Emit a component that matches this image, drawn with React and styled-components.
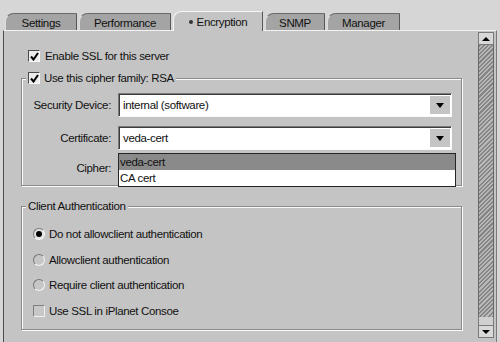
import React from "react";
import styled, { createGlobalStyle } from "styled-components";

const GlobalStyle = createGlobalStyle`
  html, body {
    margin: 0;
    padding: 0;
    background: #d6d6d6;
  }
  body {
    font-family: "Liberation Sans", Arial, sans-serif;
    font-size: 11.5px;
    letter-spacing: -0.35px;
    color: #111;
  }
`;

const Window = styled.div`
  width: 500px;
  height: 342px;
  display: flex;
  flex-direction: column;
  overflow: hidden;
  background: #d6d6d6;
`;

const TabBar = styled.div`
  height: 30px;
  box-sizing: border-box;
  display: flex;
  align-items: flex-end;
  gap: 2px;
  padding-left: 5px;
  position: relative;
  z-index: 1;
`;

const Tab = styled.div`
  width: ${(p) => p.w}px;
  height: ${(p) => (p.active ? 20 : 17)}px;
  margin-bottom: ${(p) => (p.active ? -1 : 0)}px;
  box-sizing: border-box;
  display: flex;
  align-items: center;
  justify-content: center;
  gap: 4px;
  padding-top: 1px;
  background: ${(p) => (p.active ? "#c4c4c4" : "#a4a4a4")};
  border-top: 1px solid ${(p) => (p.active ? "#f6f6f6" : "#6a6a6a")};
  border-left: 1px solid ${(p) => (p.active ? "#f6f6f6" : "#dcdcdc")};
  border-right: 1px solid #585858;
  border-top-left-radius: 9px 8px;
`;

const TabDot = styled.span`
  width: 4px;
  height: 4px;
  border-radius: 50%;
  background: #333;
`;

const Body = styled.div`
  flex: 1;
  min-height: 0;
  display: flex;
  margin: 0 3px;
  padding-right: 2px;
  border-top: 1px solid #f2f2f2;
  border-left: 1px solid #4c4c4c;
  border-right: 1px solid #7a7a7a;
  background: #c4c4c4;
`;

const Content = styled.div`
  flex: 1;
  display: flex;
  flex-direction: column;
  padding: 18px 0 0 17px;
`;

const CheckRow = styled.div`
  display: flex;
  align-items: center;
  gap: ${(p) => p.gap || 5}px;
  height: 14px;
  margin-left: ${(p) => p.indent || 0}px;
  white-space: nowrap;
`;

const Box = styled.span`
  width: 12px;
  height: 12px;
  box-sizing: border-box;
  display: flex;
  align-items: center;
  justify-content: center;
  background: ${(p) => (p.checked ? "#ececec" : "#c8c8c8")};
  border: 1px solid;
  border-color: ${(p) =>
    p.checked ? "#4a4a4a #fafafa #fafafa #4a4a4a" : "#808080 #f0f0f0 #f0f0f0 #808080"};
`;

const Radio = styled.span`
  width: 12px;
  height: 12px;
  box-sizing: border-box;
  border-radius: 50%;
  display: flex;
  align-items: center;
  justify-content: center;
  background: ${(p) => (p.checked ? "#e4e4e4" : "#c6c6c6")};
  border: 1px solid;
  border-color: #777 #f4f4f4 #f4f4f4 #777;

  &::after {
    content: "";
    width: 6px;
    height: 6px;
    border-radius: 50%;
    background: #000;
    display: ${(p) => (p.checked ? "block" : "none")};
  }
`;

const Fieldset = styled.fieldset`
  margin: ${(p) => p.top}px 0 0;
  padding: 0;
  width: 441px;
  box-sizing: border-box;
  border: 1px solid #8a8a8a;
  box-shadow: 1px 1px 0 #fafafa, inset 1px 1px 0 #fafafa;
  min-width: 0;
`;

const Legend = styled.legend`
  margin-left: 4px;
  padding: 0 2px;
  height: 14px;
  line-height: 14px;
  display: flex;
  align-items: center;
  background: #c4c4c4;
`;

const FieldGrid = styled.div`
  display: grid;
  grid-template-columns: 80px 334px;
  grid-template-rows: 24px 24px 18px;
  column-gap: 7px;
  row-gap: 9px;
  padding: 8px 0 8px 9px;
`;

const Label = styled.span`
  text-align: right;
  align-self: center;
  white-space: nowrap;
`;

const Field = styled.div`
  position: relative;
`;

const SelectBox = styled.div`
  height: 100%;
  box-sizing: border-box;
  display: flex;
  background: #fff;
  border: 1px solid;
  border-color: #7a7a7a #fafafa #fafafa #7a7a7a;
  box-shadow: inset 1px 1px 0 #3a3a3a;
`;

const SelectValue = styled.span`
  flex: 1;
  display: flex;
  align-items: center;
  padding-left: 4px;
`;

const ArrowBtn = styled.span`
  width: 20px;
  margin: 2px 1px 2px 0;
  display: flex;
  align-items: center;
  justify-content: center;
  background: #c4c4c4;

  &::after {
    content: "";
    border-left: 4px solid transparent;
    border-right: 4px solid transparent;
    border-top: 5px solid #000;
  }
`;

const Popup = styled.div`
  position: absolute;
  top: calc(100% + 3px);
  left: 0;
  width: 338px;
  box-sizing: border-box;
  background: #fff;
  border: 1px solid #262626;
  z-index: 2;
`;

const PopupItem = styled.div`
  height: 16px;
  display: flex;
  align-items: center;
  padding-left: 1px;
  background: ${(p) => (p.selected ? "#8a8a8a" : "#fff")};
`;

const OptionList = styled.div`
  display: flex;
  flex-direction: column;
  gap: 11.5px;
  padding: 14px 0 11.5px 11px;
`;

const ScrollBar = styled.div`
  width: 16px;
  margin: 1px 0 4px;
  display: flex;
  flex-direction: column;
`;

const ScrollBtn = styled.div`
  height: 13px;
  box-sizing: border-box;
  display: flex;
  align-items: center;
  justify-content: center;
  background: #d8d8d8;
  border: 1px solid #7a7a7a;

  &::after {
    content: "";
    border-left: 4px solid transparent;
    border-right: 4px solid transparent;
    ${(p) =>
      p.down ? "border-top: 4px solid #000;" : "border-bottom: 4px solid #000;"}
  }
`;

const Thumb = styled.div`
  flex: 1;
  border-left: 1px solid #686868;
  border-right: 1px solid #686868;
  background: repeating-linear-gradient(
    135deg,
    #858585 0 1.5px,
    #b8b8b8 1.5px 3px
  );
`;

const TrackGap = styled.div`
  height: 8px;
  background: #d0d0d0;
  border-left: 1px solid #7a7a7a;
  border-right: 1px solid #7a7a7a;
`;

const Check = () => (
  <svg width="9" height="9" viewBox="0 0 9 9">
    <path d="M1 4.5 L3.5 7.5 L8 1" fill="none" stroke="#000" strokeWidth="2" />
  </svg>
);

const Checkbox = ({ checked }) => (
  <Box checked={checked}>{checked && <Check />}</Box>
);

const Select = ({ value, children }) => (
  <Field>
    <SelectBox>
      <SelectValue>{value}</SelectValue>
      <ArrowBtn />
    </SelectBox>
    {children}
  </Field>
);

const tabs = [
  { name: "Settings", w: 72 },
  { name: "Performance", w: 92 },
  { name: "Encryption", w: 90, active: true },
  { name: "SNMP", w: 60 },
  { name: "Manager", w: 73 },
];

const auth = [
  "Do not allowclient authentication",
  "Allowclient authentication",
  "Require client authentication",
];

export default function App() {
  return (
    <Window>
      <GlobalStyle />
      <TabBar>
        {tabs.map((t) => (
          <Tab key={t.name} w={t.w} active={t.active}>
            {t.active && <TabDot />}
            {t.name}
          </Tab>
        ))}
      </TabBar>
      <Body>
        <Content>
          <CheckRow indent={7}>
            <Checkbox checked />
            Enable SSL for this server
          </CheckRow>

          <Fieldset top={8}>
            <Legend>
              <CheckRow gap={4}>
                <Checkbox checked />
                Use this cipher family: RSA
              </CheckRow>
            </Legend>
            <FieldGrid>
              <Label>Security Device:</Label>
              <Select value="internal (software)" />
              <Label>Certificate:</Label>
              <Select value="veda-cert">
                <Popup>
                  <PopupItem selected>veda-cert</PopupItem>
                  <PopupItem>CA cert</PopupItem>
                </Popup>
              </Select>
              <Label>Cipher:</Label>
              <Select value="" />
            </FieldGrid>
          </Fieldset>

          <Fieldset top={13}>
            <Legend>Client Authentication</Legend>
            <OptionList>
              {auth.map((a, i) => (
                <CheckRow key={a} gap={4}>
                  <Radio checked={i === 0} />
                  {a}
                </CheckRow>
              ))}
              <CheckRow gap={4}>
                <Checkbox />
                Use SSL in iPlanet Consoe
              </CheckRow>
            </OptionList>
          </Fieldset>
        </Content>
        <ScrollBar>
          <ScrollBtn />
          <Thumb />
          <TrackGap />
          <ScrollBtn down />
        </ScrollBar>
      </Body>
    </Window>
  );
}
